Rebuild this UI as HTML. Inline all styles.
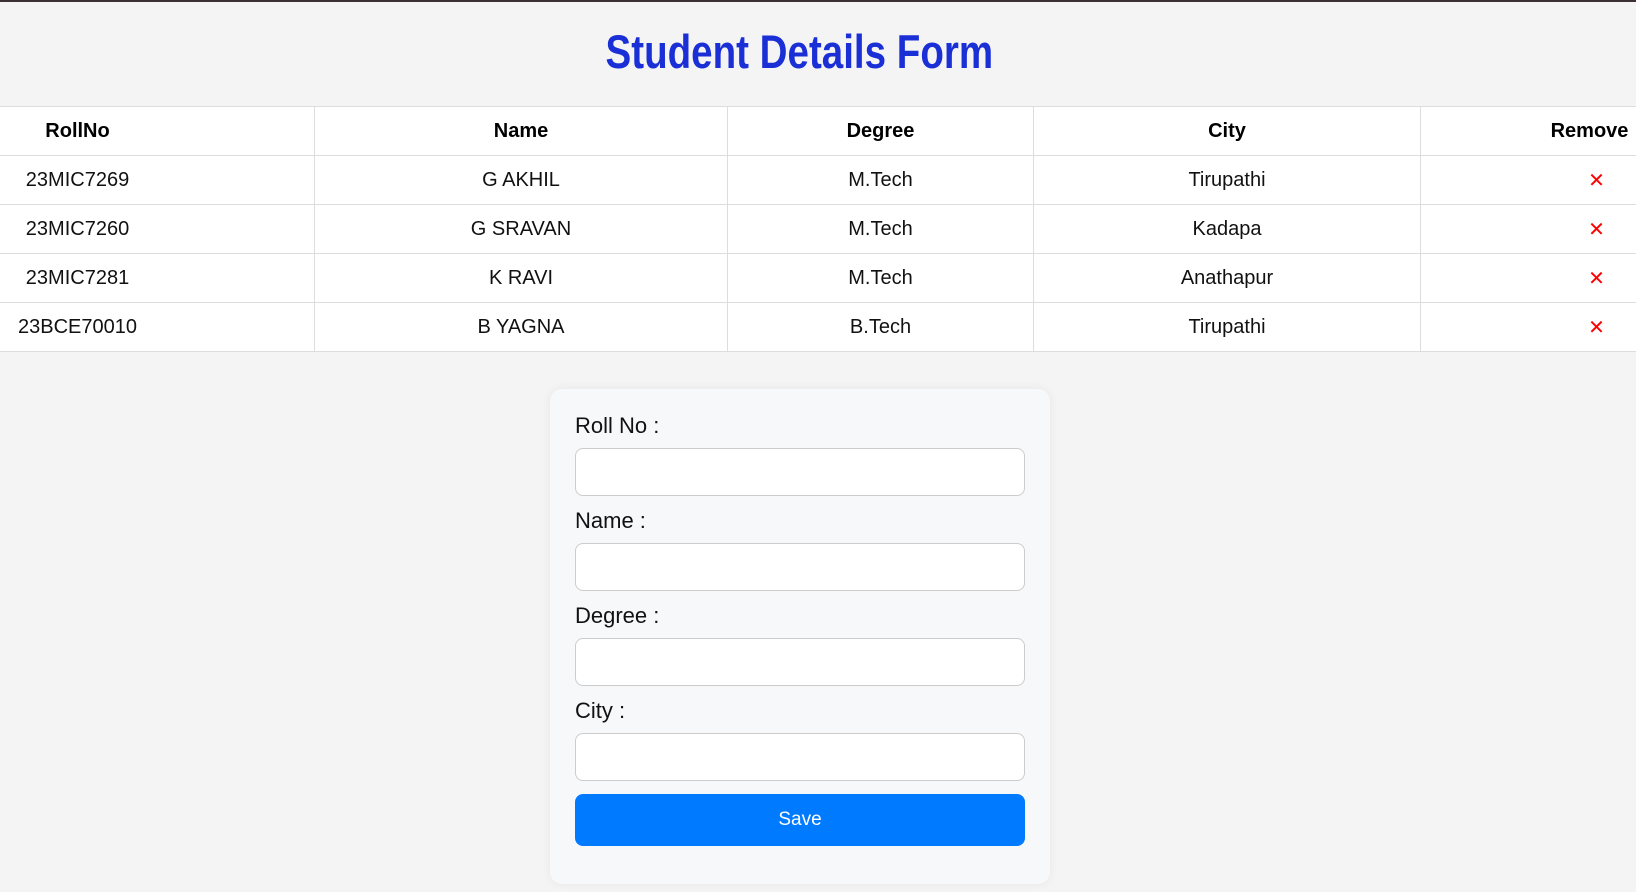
<!DOCTYPE html>
<html><head><meta charset="utf-8"><style>
*{box-sizing:border-box;margin:0;padding:0}
body{width:1636px;height:892px;overflow:hidden;background:#f4f4f4;font-family:"Liberation Sans",Arial,sans-serif;position:relative;border-top:2px solid #3a3036}
h1{position:absolute;top:22px;left:-19px;width:1636px;text-align:center;height:60px}
h1 span{display:inline-block;font-size:47px;font-weight:bold;color:#1a2fd6;transform:scaleX(0.82);transform-origin:center;white-space:nowrap}
table{position:absolute;left:-160px;top:104px;width:1918px;border-collapse:collapse;background:#fff;table-layout:fixed}
td,th{border:1px solid #ddd;height:49px;text-align:center;font-size:20px;color:#111}
th{font-weight:bold;color:#000}
td.x{color:#f00;font-size:20px;padding-left:14px}
.card{position:absolute;left:550px;top:387px;width:500px;height:495px;background:#f7f8fa;border-radius:12px;box-shadow:0 0 10px rgba(0,0,0,.06)}
.lbl{position:absolute;left:25px;font-size:22px;color:#111}
.inp{position:absolute;left:25px;width:450px;height:48px;background:#fff;border:1px solid #ccc;border-radius:8px}
.btn{position:absolute;left:25px;top:405px;width:450px;height:52px;background:#007bff;border-radius:8px;color:#fff;font-size:19px;text-align:center;line-height:52px}
</style></head><body>
<h1><span>Student Details Form</span></h1>
<table>
<colgroup><col style="width:474px"><col style="width:413px"><col style="width:306px"><col style="width:387px"><col style="width:338px"></colgroup>
<tr><th>RollNo</th><th>Name</th><th>Degree</th><th>City</th><th>Remove</th></tr>
<tr><td>23MIC7269</td><td>G AKHIL</td><td>M.Tech</td><td>Tirupathi</td><td class="x">✕</td></tr>
<tr><td>23MIC7260</td><td>G SRAVAN</td><td>M.Tech</td><td>Kadapa</td><td class="x">✕</td></tr>
<tr><td>23MIC7281</td><td>K RAVI</td><td>M.Tech</td><td>Anathapur</td><td class="x">✕</td></tr>
<tr><td>23BCE70010</td><td>B YAGNA</td><td>B.Tech</td><td>Tirupathi</td><td class="x">✕</td></tr>
</table>
<div class="card">
<div class="lbl" style="top:24px">Roll No :</div><div class="inp" style="top:59px"></div>
<div class="lbl" style="top:119px">Name :</div><div class="inp" style="top:154px"></div>
<div class="lbl" style="top:214px">Degree :</div><div class="inp" style="top:249px"></div>
<div class="lbl" style="top:309px">City :</div><div class="inp" style="top:344px"></div>
<div class="btn">Save</div>
</div>
</body></html>
